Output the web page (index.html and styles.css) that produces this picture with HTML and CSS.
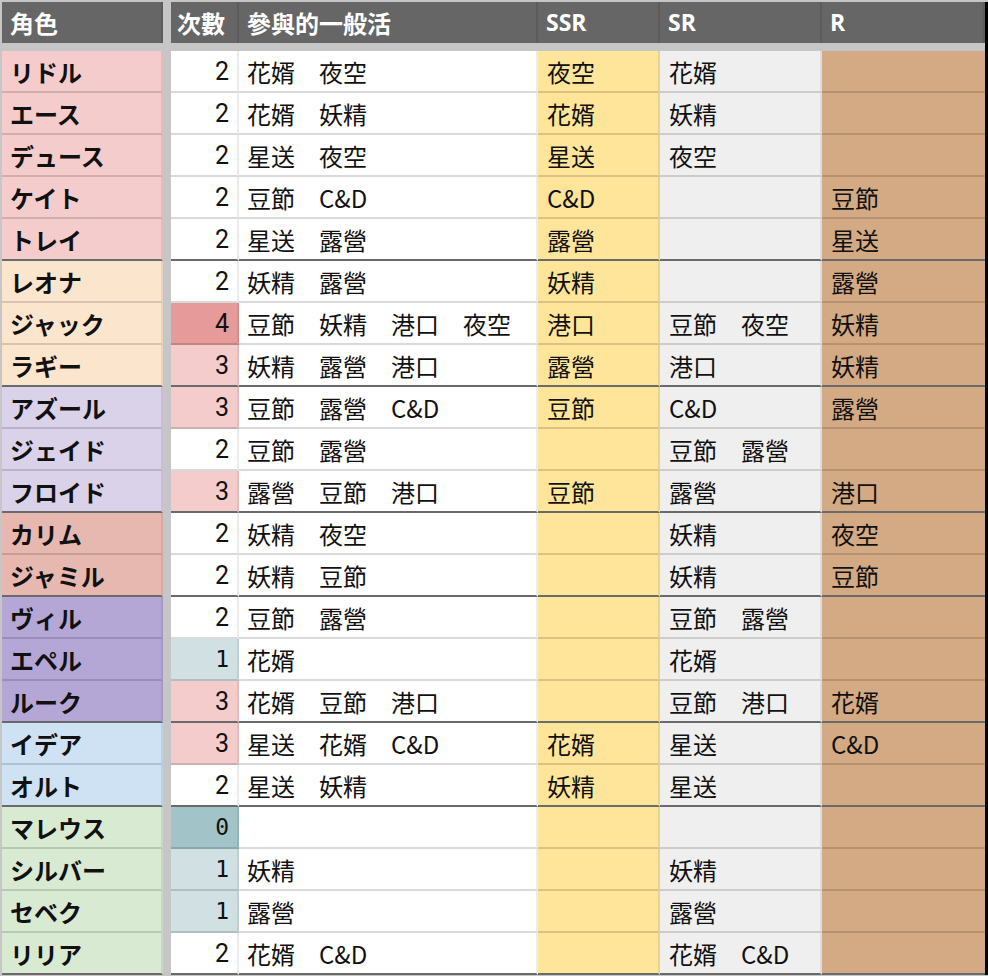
FILE: index.html
```html
<!DOCTYPE html>
<html lang="ja">
<head>
<meta charset="utf-8">
<title>角色</title>
<link rel="stylesheet" href="styles.css">
</head>
<body>
<div class="sheet">
  <div class="row head">
    <div class="c name">角色</div>
    <div class="c cnt">次數</div>
    <div class="c">參與的一般活</div>
    <div class="c lat">SSR</div>
    <div class="c lat">SR</div>
    <div class="c lat">R</div>
  </div>

  <div class="row">
    <div class="c name hs">リドル</div><div class="c cnt">2</div><div class="c ev">花婿　夜空</div><div class="c ssr">夜空</div><div class="c sr">花婿</div><div class="c r"></div>
  </div>
  <div class="row">
    <div class="c name hs">エース</div><div class="c cnt">2</div><div class="c ev">花婿　妖精</div><div class="c ssr">花婿</div><div class="c sr">妖精</div><div class="c r"></div>
  </div>
  <div class="row">
    <div class="c name hs">デュース</div><div class="c cnt">2</div><div class="c ev">星送　夜空</div><div class="c ssr">星送</div><div class="c sr">夜空</div><div class="c r"></div>
  </div>
  <div class="row">
    <div class="c name hs">ケイト</div><div class="c cnt">2</div><div class="c ev">豆節　C&amp;D</div><div class="c ssr">C&amp;D</div><div class="c sr"></div><div class="c r">豆節</div>
  </div>
  <div class="row sep">
    <div class="c name hs">トレイ</div><div class="c cnt">2</div><div class="c ev">星送　露營</div><div class="c ssr">露營</div><div class="c sr"></div><div class="c r">星送</div>
  </div>

  <div class="row">
    <div class="c name sv">レオナ</div><div class="c cnt">2</div><div class="c ev">妖精　露營</div><div class="c ssr">妖精</div><div class="c sr"></div><div class="c r">露營</div>
  </div>
  <div class="row">
    <div class="c name sv">ジャック</div><div class="c cnt n4">4</div><div class="c ev">豆節　妖精　港口　夜空</div><div class="c ssr">港口</div><div class="c sr">豆節　夜空</div><div class="c r">妖精</div>
  </div>
  <div class="row sep">
    <div class="c name sv">ラギー</div><div class="c cnt n3">3</div><div class="c ev">妖精　露營　港口</div><div class="c ssr">露營</div><div class="c sr">港口</div><div class="c r">妖精</div>
  </div>

  <div class="row">
    <div class="c name oc">アズール</div><div class="c cnt n3">3</div><div class="c ev">豆節　露營　C&amp;D</div><div class="c ssr">豆節</div><div class="c sr">C&amp;D</div><div class="c r">露營</div>
  </div>
  <div class="row">
    <div class="c name oc">ジェイド</div><div class="c cnt">2</div><div class="c ev">豆節　露營</div><div class="c ssr"></div><div class="c sr">豆節　露營</div><div class="c r"></div>
  </div>
  <div class="row sep">
    <div class="c name oc">フロイド</div><div class="c cnt n3">3</div><div class="c ev">露營　豆節　港口</div><div class="c ssr">豆節</div><div class="c sr">露營</div><div class="c r">港口</div>
  </div>

  <div class="row">
    <div class="c name sc">カリム</div><div class="c cnt">2</div><div class="c ev">妖精　夜空</div><div class="c ssr"></div><div class="c sr">妖精</div><div class="c r">夜空</div>
  </div>
  <div class="row sep">
    <div class="c name sc">ジャミル</div><div class="c cnt">2</div><div class="c ev">妖精　豆節</div><div class="c ssr"></div><div class="c sr">妖精</div><div class="c r">豆節</div>
  </div>

  <div class="row">
    <div class="c name pf">ヴィル</div><div class="c cnt">2</div><div class="c ev">豆節　露營</div><div class="c ssr"></div><div class="c sr">豆節　露營</div><div class="c r"></div>
  </div>
  <div class="row">
    <div class="c name pf">エペル</div><div class="c cnt n1 mono">1</div><div class="c ev">花婿</div><div class="c ssr"></div><div class="c sr">花婿</div><div class="c r"></div>
  </div>
  <div class="row sep">
    <div class="c name pf">ルーク</div><div class="c cnt n3">3</div><div class="c ev">花婿　豆節　港口</div><div class="c ssr"></div><div class="c sr">豆節　港口</div><div class="c r">花婿</div>
  </div>

  <div class="row">
    <div class="c name ig">イデア</div><div class="c cnt n3">3</div><div class="c ev">星送　花婿　C&amp;D</div><div class="c ssr">花婿</div><div class="c sr">星送</div><div class="c r">C&amp;D</div>
  </div>
  <div class="row sep">
    <div class="c name ig">オルト</div><div class="c cnt">2</div><div class="c ev">星送　妖精</div><div class="c ssr">妖精</div><div class="c sr">星送</div><div class="c r"></div>
  </div>

  <div class="row">
    <div class="c name ds">マレウス</div><div class="c cnt n0 mono">0</div><div class="c ev"></div><div class="c ssr"></div><div class="c sr"></div><div class="c r"></div>
  </div>
  <div class="row">
    <div class="c name ds">シルバー</div><div class="c cnt n1 mono">1</div><div class="c ev">妖精</div><div class="c ssr"></div><div class="c sr">妖精</div><div class="c r"></div>
  </div>
  <div class="row">
    <div class="c name ds">セベク</div><div class="c cnt n1 mono">1</div><div class="c ev">露營</div><div class="c ssr"></div><div class="c sr">露營</div><div class="c r"></div>
  </div>
  <div class="row sep">
    <div class="c name ds">リリア</div><div class="c cnt">2</div><div class="c ev">花婿　C&amp;D</div><div class="c ssr"></div><div class="c sr">花婿　C&amp;D</div><div class="c r"></div>
  </div>
</div>
</body>
</html>
```
FILE: styles.css
```css
html, body {
  margin: 0;
  padding: 0;
}
body {
  background: #c6c6c6;
  font-family: "Noto Sans CJK TC", "Noto Sans CJK JP", sans-serif;
  font-size: 24px;
  color: #111;
  width: 988px;
  height: 976px;
  overflow: hidden;
}
.sheet {
  margin: 2px 0 0 2px;
  width: 983px;
  border-right: 3px solid #000;
  display: flex;
  flex-direction: column;
}
.row {
  display: grid;
  grid-template-columns: 169px 68px 299px 122px 162px 163px;
  height: 42px;
}
.c {
  box-sizing: border-box;
  display: flex;
  align-items: center;
  padding-left: 8px;
  padding-top: 1px;
  white-space: pre;
  background: #fff;
  border-bottom: 2px solid rgba(0, 0, 0, 0.14);
  border-right: 2px solid rgba(0, 0, 0, 0.08);
  line-height: 1;
}
.row.sep .c {
  border-bottom-color: #6a6a6a;
}
.name {
  margin-right: 8px;
  font-weight: 700;
}
.head {
  height: 41px;
  margin-bottom: 8px;
}
.head .c {
  background: #666;
  color: #fff;
  font-weight: 700;
  border-bottom: 0;
  border-right: 2px solid #5c5c5c;
  padding-left: 8px;
  padding-top: 0;
}
.head .cnt {
  justify-content: flex-start;
  font-family: "Noto Sans CJK TC", sans-serif;
  font-size: 24px;
  padding-left: 6px;
  padding-right: 0;
}
.head .lat {
  font-family: "Open Sans", "Noto Sans", sans-serif;
  font-size: 23px;
  font-weight: 700;
  padding-left: 8px;
}
.cnt {
  justify-content: flex-end;
  padding-left: 0;
  padding-right: 8px;
  font-family: Roboto, "Noto Sans", sans-serif;
  font-size: 25px;
}
.mono {
  font-family: "DejaVu Sans Mono", monospace;
  font-size: 23px;
}
.ev { padding-left: 8px; }
.ssr { background: #ffe599; padding-left: 9px; }
.sr { background: #efefef; padding-left: 9px; }
.r { background: #d4aa84; padding-left: 9px; border-right: 0; }

.hs { background: #f4cccc; }
.sv { background: #fce5cd; }
.oc { background: #d9d2e9; }
.sc { background: #e6b8af; }
.pf { background: #b4a7d6; }
.ig { background: #cfe2f3; }
.ds { background: #d9ead3; }

.n4 { background: #e69a9a; }
.n3 { background: #f4cccc; }
.n1 { background: #d0e0e3; }
.n0 { background: #a2c4c9; }
```
